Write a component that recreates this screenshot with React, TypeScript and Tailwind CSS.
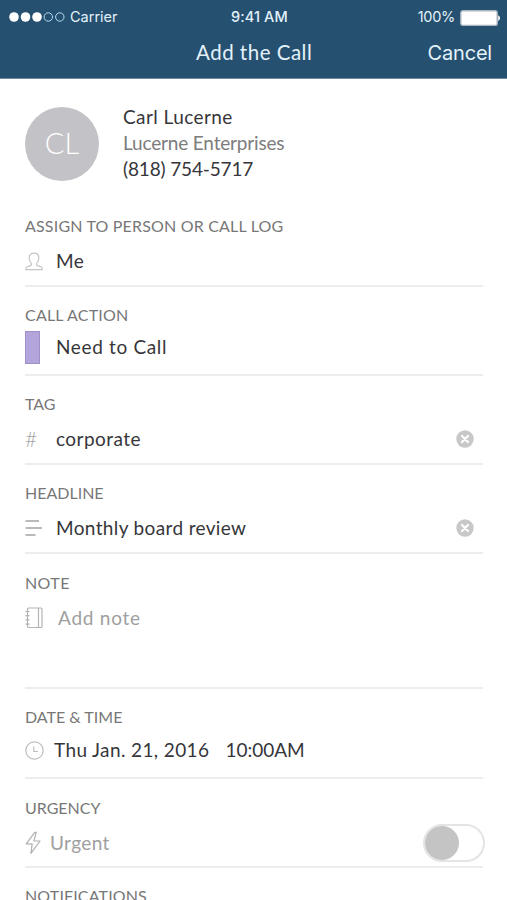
import type { ReactNode } from "react";

function SignalDots() {
  return (
    <svg width="56" height="12" viewBox="0 0 56 12" className="shrink-0">
      <circle cx="5" cy="6" r="4.8" fill="#fff" />
      <circle cx="16.5" cy="6" r="4.8" fill="#fff" />
      <circle cx="28" cy="6" r="4.8" fill="#fff" />
      <circle cx="39.3" cy="6" r="4.2" fill="none" stroke="#b9dcf0" strokeWidth="1" />
      <circle cx="50.8" cy="6" r="4.2" fill="none" stroke="#b9dcf0" strokeWidth="1" />
    </svg>
  );
}

function Battery() {
  return (
    <svg width="41" height="17" viewBox="0 0 41 17" className="mt-[2px] shrink-0">
      <rect x="0.8" y="0.8" width="36.4" height="14.6" rx="2" fill="#fff" stroke="#a9b6c0" strokeWidth="1.4" />
      <path d="M38.2 5.2a3.2 3.2 0 0 1 0 5.8z" fill="#fff" />
    </svg>
  );
}

function PersonIcon() {
  return (
    <svg width="18" height="19" viewBox="0 0 18 19" fill="none" stroke="#c4c4c4" strokeWidth="1.2" strokeLinejoin="round">
      <path d="M6.4 11.4C4.9 10.2 4.2 8.2 4.2 5.7C4.2 2.8 6 1.2 9 1.2s4.8 1.6 4.8 4.5c0 2.5-.7 4.5-2.2 5.7v1.2c0 .5.3.8.8 1l3.3 1.2c1 .4 1.5 1 1.5 2v.8H.8v-.8c0-1 .5-1.6 1.5-2l3.3-1.2c.5-.2.8-.5.8-1z" />
    </svg>
  );
}

function LinesIcon() {
  return (
    <svg width="18" height="16" viewBox="0 0 18 16" stroke="#a3a3a3" strokeWidth="1.3">
      <path d="M0.5 1H14M0.5 8H17M0.5 15H10.5" />
    </svg>
  );
}

function NotebookIcon() {
  return (
    <svg width="19" height="22" viewBox="0 0 19 22" fill="none" stroke="#b4b4b4" strokeWidth="1.2">
      <rect x="2.5" y="1" width="14.5" height="19.5" rx="1" />
      <path d="M13.5 1v19.5M0.5 4.5h4M0.5 8.7h4M0.5 12.9h4M0.5 17.1h4" />
    </svg>
  );
}

function ClockIcon() {
  return (
    <svg width="19" height="19" viewBox="0 0 19 19" fill="none" stroke="#bdbdbd" strokeWidth="1.2">
      <circle cx="9.5" cy="9.5" r="8.7" />
      <path d="M8.8 5.5v5H13" />
    </svg>
  );
}

function BoltIcon() {
  return (
    <svg width="17" height="24" viewBox="0 0 17 24" fill="none" stroke="#b0b0b0" strokeWidth="1.2" strokeLinejoin="round">
      <path d="M9.8 1.3L1.2 12.9H7.2L5.9 22.3L15 10H8.9L11.2 1.3z" />
    </svg>
  );
}

function ClearButton() {
  return (
    <button className="mr-[9px] ml-auto" aria-label="Clear">
      <svg width="18" height="18" viewBox="0 0 18 18">
        <circle cx="9" cy="9" r="8.7" fill="#c8c8c8" />
        <path d="M6 6l6 6M12 6l-6 6" stroke="#fff" strokeWidth="2.2" strokeLinecap="round" />
      </svg>
    </button>
  );
}

type FieldProps = { label: string; className: string; rowClass?: string; labelClass?: string; children?: ReactNode };

function Field({ label, className, rowClass = "", labelClass = "", children }: FieldProps) {
  return (
    <section className={`w-[458px] shrink-0 border-b-2 border-[#ededed] pt-[18px] ${className}`}>
      <h2 className={`text-base leading-5 text-[#777] ${labelClass}`}>{label}</h2>
      <div className={`flex items-center whitespace-pre text-[19px] text-[#36363a] ${rowClass}`}>{children}</div>
    </section>
  );
}

export default function App() {
  return (
    <div className="flex h-[900px] w-[507px] flex-col overflow-hidden bg-white font-['Lato',sans-serif]">
      <header className="h-[79px] shrink-0 border-b border-[#6d8ba1] bg-[#265070] text-[#e3f2fb]">
        <div className="flex h-[34px] items-center pr-[6px] pl-[9px] font-['Inter',sans-serif] text-[14.5px]">
          <div className="flex w-[222px] items-center gap-[5px]">
            <SignalDots />
            <span>Carrier</span>
          </div>
          <span className="font-medium tracking-[0.1px]">9:41 AM</span>
          <div className="ml-auto flex items-center gap-[5px]">
            <span className="tracking-[-0.3px]">100%</span>
            <Battery />
          </div>
        </div>
        <div className="flex h-[37px] items-center">
          <h1 className="ml-[196px] text-[20.5px] tracking-[0.5px]">Add the Call</h1>
          <button className="mr-[15px] ml-auto font-['Inter',sans-serif] text-[20px] tracking-[-0.2px]">Cancel</button>
        </div>
      </header>

      <main className="flex flex-col pl-[25px]">
        <div className="flex h-[119px] shrink-0 items-start pt-7">
          <div className="flex size-[74px] items-center justify-center rounded-full bg-[#c3c2c7] pb-0.5 text-[29px] font-light text-white">
            CL
          </div>
          <div className="-mt-[3px] ml-6 text-[19px] leading-[26px] text-[#36363a]">
            <p className="tracking-[0.42px]">Carl Lucerne</p>
            <p className="tracking-[-0.17px] text-[#7c7c7c]">Lucerne Enterprises</p>
            <p className="tracking-[-0.15px]">(818) 754-5717</p>
          </div>
        </div>

        <Field label="ASSIGN TO PERSON OR CALL LOG" labelClass="tracking-[0.18px]" className="h-[89px]" rowClass="mt-3 h-[26px]">
          <span className="w-[31px]"><PersonIcon /></span>
          <span className="tracking-[0.4px]">Me</span>
        </Field>
        <Field label="CALL ACTION" labelClass="tracking-[0.2px]" className="h-[89px]" rowClass="mt-[6px] h-[33px]">
          <span className="mr-4 h-[33px] w-[15px] border border-[#a18fcb] bg-[#b3a4dc]" />
          <span className="tracking-[0.65px]">Need to Call</span>
        </Field>
        <Field label="TAG" className="h-[89px]" rowClass="mt-3 h-[26px]">
          <span className="w-[31px] text-[21px] font-light text-[#a5a5a5]">#</span>
          <span className="tracking-[0.45px]">corporate</span>
          <ClearButton />
        </Field>
        <Field label="HEADLINE" className="h-[89px]" rowClass="mt-3 h-[26px]">
          <span className="w-[31px]"><LinesIcon /></span>
          <span className="tracking-[0.36px]">Monthly board review</span>
          <ClearButton />
        </Field>
        <Field label="NOTE" labelClass="mt-px tracking-[0.4px]" className="h-[135px]" rowClass="mt-3 h-[26px]">
          <span className="w-[33px]"><NotebookIcon /></span>
          <span className="tracking-[0.75px] text-[#a0a0a0]">Add note</span>
        </Field>
        <Field label="DATE & TIME" className="h-[90px]" rowClass="mt-[10px] h-[26px]">
          <span className="w-[29px]"><ClockIcon /></span>
          <span className="tracking-[0.38px]">Thu Jan. 21, 2016</span>
          <span className="ml-4">10:00AM</span>
        </Field>
        <Field label="URGENCY" className="h-[89px]" labelClass="mt-px" rowClass="mt-[6px] h-[38px]">
          <span className="w-[25px]"><BoltIcon /></span>
          <span className="tracking-[0.4px] text-[#a0a0a0]">Urgent</span>
          <button className="-mr-0.5 ml-auto h-[38px] w-[62px] rounded-full border-2 border-[#e4e4e4]" role="switch" aria-checked="false">
            <span className="block size-[34px] rounded-full bg-[#c4c4c4]" />
          </button>
        </Field>
        <Field label="NOTIFICATIONS" labelClass="tracking-[0.15px]" className="h-[89px]" />
      </main>
    </div>
  );
}
